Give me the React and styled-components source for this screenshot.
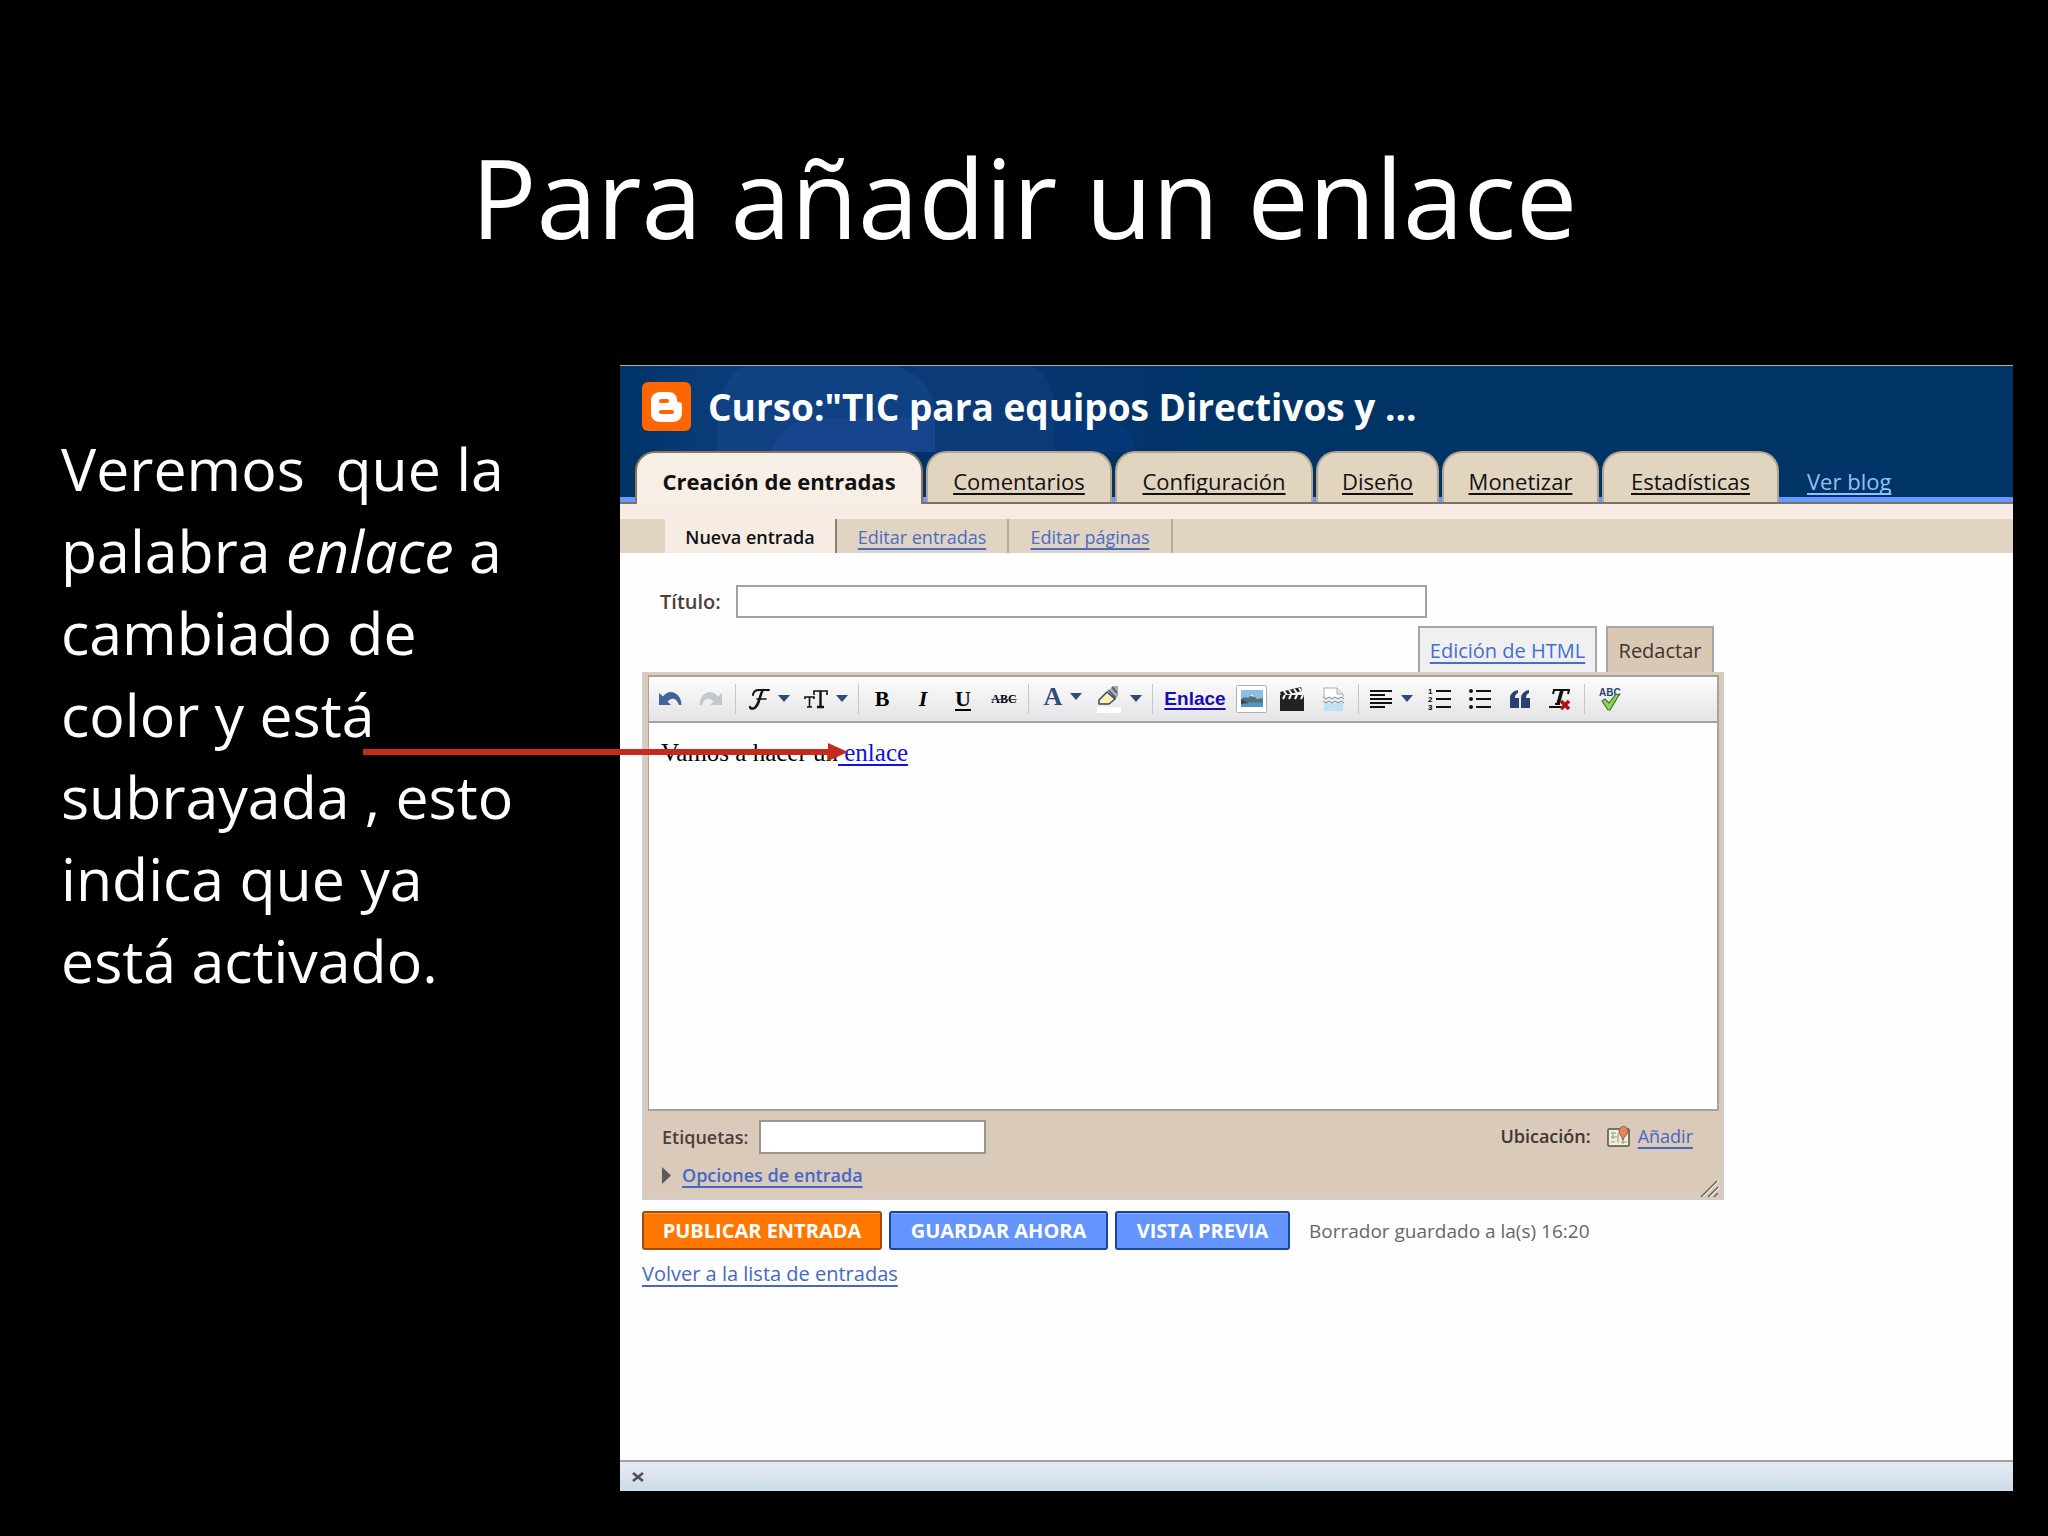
import React, { useState } from 'react'
import styled, { createGlobalStyle } from 'styled-components'

const uiFont = '"Open Sans", "Noto Sans", sans-serif'

const navTabs = [
  { label: 'Creación de entradas', width: 288 },
  { label: 'Comentarios', width: 186 },
  { label: 'Configuración', width: 198 },
  { label: 'Diseño', width: 123 },
  { label: 'Monetizar', width: 157 },
  { label: 'Estadísticas', width: 177 },
]

const Caret = () => (
  <svg width="12" height="8" viewBox="0 0 12 8">
    <path d="M0 0h12L6 7z" fill="#2f4a7c" />
  </svg>
)

const BloggerLogo = () => (
  <svg width="49" height="49" viewBox="0 0 49 49">
    <rect width="49" height="49" rx="6" fill="#ff6600" />
    <path
      d="M18 10h8.500c5 0 8.500 3.500 8.500 8v.5c0 1.200.8 1.800 2 1.800h.6c1.400 0 2.400.9 2.400 2.400V31c0 5.500-4 9-9 9H18c-5.500 0-9-3.500-9-9V19c0-5.500 4-9 9-9z"
      fill="#fff"
    />
    <rect x="17" y="17" width="10" height="4" rx="2" fill="#ff6600" />
    <rect x="17" y="28" width="15" height="4" rx="2" fill="#ff6600" />
  </svg>
)

const Undo = ({ color, flip }) => (
  <svg width="23" height="16" viewBox="0 0 23 16">
    <g transform={flip ? 'translate(23 0) scale(-1 1)' : undefined}>
      <path d="M0 2v12h12L8.500 10.500C12 6.500 17 6 20 14h2.500C22.500 6 17 1 12 1 9 1 6 2.500 4 5.500z" fill={color} />
    </g>
  </svg>
)

const FontFace = () => (
  <svg width="21" height="22" viewBox="0 0 21 22" fill="none" stroke="#111" strokeLinecap="round">
    <path d="M4 7C4.500 3 7 2 10 2h10" strokeWidth="2" />
    <path d="M14 2C10.500 6 10.500 19 4.500 20.500c-2 .4-3.500-.5-3.500-1.500" strokeWidth="2.500" />
    <path d="M8 11h9" strokeWidth="1.600" />
  </svg>
)

const FontSize = () => (
  <svg width="24" height="20" viewBox="0 0 24 20" fill="none" stroke="#111">
    <path d="M10 6V2h13v4" strokeWidth="1.600" />
    <path d="M16.500 2v16M13 18h7" strokeWidth="2.400" />
    <path d="M1 10V8h9v2M5.500 8v10M3 18h5" strokeWidth="1.600" />
  </svg>
)

const Marker = () => (
  <svg width="26" height="28" viewBox="0 0 26 28">
    <rect x="1" y="22" width="24" height="6" fill="#fff" />
    <path d="M13 5l4-4h5v10l-4 3z" fill="#a9a9ad" />
    <path d="M12 5l8 8M16 2l5 6" stroke="#4c5468" strokeWidth="1.500" />
    <path d="M11 7l8 7-6 5H3v-4z" fill="#fbf4b0" stroke="#34436b" strokeWidth="1.500" strokeLinejoin="round" />
  </svg>
)

const Picture = () => (
  <svg width="31" height="28" viewBox="0 0 31 28">
    <rect x=".5" y=".5" width="30" height="27" rx="1" fill="#fff" stroke="#b0b0b4" />
    <rect x="5" y="5" width="22" height="17" fill="#86bfe8" />
    <path d="M5 14l4-2 3 1 4-4 5 5 6-1v5H5z" fill="#5a7078" />
    <path d="M14 11l2-2 3 3z" fill="#e3edf2" />
    <path d="M5 18l8-1 14 1v4H5z" fill="#4e95c5" />
    <path d="M5 14l5 3 3 1-8 1z" fill="#34464a" />
  </svg>
)

const Clapper = () => (
  <svg width="24" height="24" viewBox="0 0 24 24">
    <rect x="0" y="11" width="24" height="13" fill="#222" />
    <path d="M0 5l21-5 1 4L1 9z" fill="#222" />
    <path d="M4 4l3 4M9 3l3 4M14 2l3 4M19 1l2 3" stroke="#fff" strokeWidth="2" />
    <rect x="0" y="8" width="24" height="4" fill="#222" />
    <path d="M5 8l-2 4M11 8l-2 4M17 8l-2 4M23 8l-2 4" stroke="#fff" strokeWidth="2" />
  </svg>
)

const PageBreak = () => (
  <svg width="23" height="24" viewBox="0 0 23 24">
    <path d="M2 10V1h13l6 6v3z" fill="#fff" />
    <path d="M2 10V1h13l6 6v3" fill="none" stroke="#a5adb8" />
    <path d="M15 1v6h6" fill="#dfe8f0" stroke="#a5adb8" />
    <path d="M2 16l3-1 3 2 3-2 3 2 3-2 4 1v8H2z" fill="#bfe0f5" />
    <path d="M1 10l3 2 3-2 3 2 3-2 3 2 3-2 3 2M1 14l3 2 3-2 3 2 3-2 3 2 3-2 3 2" fill="none" stroke="#76828f" />
  </svg>
)

const AlignLeft = () => (
  <svg width="23" height="20" viewBox="0 0 23 20" stroke="#111" strokeWidth="2">
    <path d="M0 2h22M0 6h15M0 10h22M0 14h22M0 18h15" />
  </svg>
)

const ListLines = ({ numbered }) => (
  <svg width="24" height="24" viewBox="0 0 24 24">
    <path d="M8 4h15M8 12h15M8 20h15" stroke="#111" strokeWidth="2" />
    {[4, 12, 20].map((y, i) =>
      numbered ? (
        <text key={y} x="0" y={y + 3} fontSize="8" fontWeight="700" fontFamily="Liberation Sans, sans-serif">
          {i + 1}
        </text>
      ) : (
        <circle key={y} cx="3" cy={y} r="2" fill="#111" />
      )
    )}
  </svg>
)

const Quotes = () => (
  <svg width="21" height="18" viewBox="0 0 21 18" fill="#2c3f70">
    <path d="M0 18V8C0 4 3 1 8 0v3C6 4 5 5 5 8h4v10z" />
    <path d="M11 18V8c0-4 3-7 8-8v3c-2 1-3 2-3 5h4v10z" />
  </svg>
)

const ClearFormat = () => (
  <svg width="24" height="23" viewBox="0 0 24 23" fill="none">
    <path d="M5 6l1-4h15l-1 4" stroke="#111" strokeWidth="2" />
    <path d="M14 2l-4 14" stroke="#111" strokeWidth="3.500" />
    <path d="M1 19h12M7 16h5" stroke="#111" strokeWidth="2" />
    <path d="M13 13l8 8M21 13l-8 8" stroke="#b01010" strokeWidth="3.500" />
  </svg>
)

const SpellCheck = () => (
  <svg width="23" height="24" viewBox="0 0 23 24">
    <text x="0" y="9" fontSize="10" fontWeight="700" fill="#2b4272" fontFamily="Liberation Sans, sans-serif">
      ABC
    </text>
    <path d="M3 14l3-2 4 4 7-9 3 1-9 15H9z" fill="#86dd4c" stroke="#4b6b48" strokeWidth="1.200" />
  </svg>
)

const MapPin = () => (
  <svg width="24" height="22" viewBox="0 0 24 22">
    <rect x="1" y="4" width="21" height="17" rx="1" fill="#f1efd9" stroke="#55514a" strokeWidth="1.500" />
    <path d="M4 8h5M4 12h6M4 17h4M11 8v10M14 17h6M6 8v6M16 14v5" stroke="#8f9b7d" />
    <path d="M16 15c-1-4-4-5-4-9a4.500 4.500 0 019 0c0 4-4 5-5 9z" fill="#e08a5c" stroke="#8a5a42" />
  </svg>
)

// soft bubbles behind the blog name
const Bubbles = () => (
  <svg width="600" height="86" viewBox="0 0 600 86">
    <rect width="600" height="86" fill="url(#fade)" />
    <path d="M290 0h120c18 6 24 22 24 44v42H300z" fill="#0a3a78" />
    <path d="M97 86V55C97 25 110 5 125 0h150c28 8 40 25 40 50v36z" fill="#104183" />
    <path d="M150 86c8-20 25-34 50-34h115v34z" fill="#16458d" />
    <path d="M434 52h48c22 4 32 16 34 34h-82z" fill="#07387a" opacity=".8" />
    <defs>
      <linearGradient id="fade">
        <stop offset="0" stopColor="#003366" />
        <stop offset=".15" stopColor="#0a3c79" />
        <stop offset=".65" stopColor="#063670" />
        <stop offset="1" stopColor="#003366" />
      </linearGradient>
    </defs>
  </svg>
)

function App() {
  const [title, setTitle] = useState('')
  const [labels, setLabels] = useState('')

  return (
    <Slide>
      <GlobalStyle />
      <Headline>Para añadir un enlace</Headline>
      <Content>
        <Explain>
          Veremos{'  '}que la palabra <em>enlace</em> a cambiado de color y está subrayada , esto indica que ya está
          activado.
        </Explain>
        <Browser>
          <BlogHeader>
            <Backdrop>
              <Bubbles />
            </Backdrop>
            <Brand>
              <BloggerLogo />
              <BlogName>Curso:"TIC para equipos Directivos y ...</BlogName>
            </Brand>
            <Nav>
              {navTabs.map((tab, i) => (
                <NavTab key={tab.label} href="#" $width={tab.width} $active={i === 0}>
                  {tab.label}
                </NavTab>
              ))}
              <ViewBlog href="#">Ver blog</ViewBlog>
            </Nav>
          </BlogHeader>
          <SubNav>
            <SubTab href="#" $width={172} $active>
              Nueva entrada
            </SubTab>
            <SubTab href="#" $width={172}>
              Editar entradas
            </SubTab>
            <SubTab href="#" $width={164}>
              Editar páginas
            </SubTab>
          </SubNav>
          <Main>
            <TitleRow>
              <TitleLabel htmlFor="titulo">Título:</TitleLabel>
              <TitleInput id="titulo" value={title} onChange={(e) => setTitle(e.target.value)} />
            </TitleRow>
            <Modes>
              <ModeTab $width={179}>Edición de HTML</ModeTab>
              <ModeTab $width={108} $active>Redactar</ModeTab>
            </Modes>
            <Editor>
              <Paper>
                <Toolbar>
                  <Tool $width={42} aria-label="Deshacer"><Undo color="#42639c" /></Tool>
                  <Tool $width={38} aria-label="Rehacer"><Undo color="#c3c7d0" flip /></Tool>
                  <Divider $width={12} />
                  <Tool $width={56} aria-label="Fuente"><FontFace /><Caret /></Tool>
                  <Tool $width={58} aria-label="Tamaño"><FontSize /><Caret /></Tool>
                  <Divider $width={6} />
                  <Letter $width={42}>B</Letter>
                  <Letter $width={40} $italic>I</Letter>
                  <Letter $width={40} $under>U</Letter>
                  <Strike $width={42}>ABC</Strike>
                  <Divider $width={6} />
                  <ColorTool $width={64}>A<Caret /></ColorTool>
                  <Tool $width={48} aria-label="Resaltar"><Marker /><Caret /></Tool>
                  <Divider $width={18} />
                  <LinkTool $width={68}>Enlace</LinkTool>
                  <Tool $width={44} aria-label="Imagen"><Picture /></Tool>
                  <Tool $width={38} aria-label="Vídeo"><Clapper /></Tool>
                  <Tool $width={44} aria-label="Salto"><PageBreak /></Tool>
                  <Divider $width={6} />
                  <Tool $width={60} aria-label="Alinear"><AlignLeft /><Caret /></Tool>
                  <Tool $width={38} aria-label="Lista numerada"><ListLines numbered /></Tool>
                  <Tool $width={42} aria-label="Lista"><ListLines /></Tool>
                  <Tool $width={38} aria-label="Cita"><Quotes /></Tool>
                  <Tool $width={42} aria-label="Quitar formato"><ClearFormat /></Tool>
                  <Divider $width={6} />
                  <Tool $width={46} aria-label="Ortografía"><SpellCheck /></Tool>
                </Toolbar>
                <Writing contentEditable suppressContentEditableWarning role="textbox" aria-label="Entrada">
                  Vamos a hacer un<a href="#"> enlace</a>
                </Writing>
              </Paper>
              <EditorFoot>
                <div>
                  <LabelRow>
                    <FieldLabel htmlFor="etiquetas">Etiquetas:</FieldLabel>
                    <LabelInput id="etiquetas" value={labels} onChange={(e) => setLabels(e.target.value)} />
                  </LabelRow>
                  <Options>
                    <svg width="9" height="17" viewBox="0 0 9 17">
                      <path d="M0 0l9 8.500L0 17z" fill="#5f5a58" />
                    </svg>
                    <BlueLink href="#" $bold>Opciones de entrada</BlueLink>
                  </Options>
                </div>
                <Place>
                  <PlaceName>Ubicación:</PlaceName>
                  <MapPin />
                  <BlueLink href="#">Añadir</BlueLink>
                </Place>
              </EditorFoot>
              <Grip>
                <svg width="20" height="18" viewBox="0 0 20 18">
                  <path d="M1 17L17 1M8 17l10-10M14 17l4-4" stroke="#6d6862" strokeWidth="1.500" />
                  <path d="M3 17L19 1M10 17l9-9" stroke="#fff" />
                </svg>
              </Grip>
            </Editor>
            <Actions>
              <ActionButton $width={240} $orange>PUBLICAR ENTRADA</ActionButton>
              <ActionButton $width={219}>GUARDAR AHORA</ActionButton>
              <ActionButton $width={175}>VISTA PREVIA</ActionButton>
              <Saved>Borrador guardado a la(s) 16:20</Saved>
            </Actions>
            <BackLink href="#">Volver a la lista de entradas</BackLink>
          </Main>
          <StatusBar>
            <CloseButton aria-label="Cerrar">
              <svg width="12" height="10" viewBox="0 0 12 10">
                <path d="M1 1l10 8M11 1L1 9" stroke="#4a4f58" strokeWidth="2.500" />
              </svg>
            </CloseButton>
          </StatusBar>
        </Browser>
        <Arrow>
          <svg width="486" height="20" viewBox="0 0 486 20" fill="#c42b1c">
            <path d="M0 7h465V1l20 9-20 9v-6H0z" />
          </svg>
        </Arrow>
      </Content>
    </Slide>
  )
}

const GlobalStyle = createGlobalStyle`
  * { box-sizing: border-box; }
  body { margin: 0; background: #000; }
  svg { display: block; flex: none; }
  button { font: inherit; border: 0; padding: 0; background: none; cursor: pointer; }
`

const Slide = styled.div`
  min-height: 100vh;
  display: flex;
  flex-direction: column;
  padding: 130px 35px 45px 61px;
  background: #000;
  color: #fff;
  font-family: ${uiFont};
`

const Headline = styled.h1`
  margin: 0 0 101px;
  padding-right: 26px;
  text-align: center;
  font-size: 109px;
  line-height: 134px;
  font-weight: 400;
`

const Content = styled.div`
  position: relative;
  flex: 1;
  display: flex;
  gap: 79px;
`

const Explain = styled.p`
  flex: 0 0 480px;
  margin: 62px 0 0;
  font-size: 59px;
  line-height: 82px;
  white-space: pre-wrap;
`

const Browser = styled.section`
  flex: 1;
  min-width: 0;
  display: flex;
  flex-direction: column;
  border-top: 1px solid #a9b0ae;
  background: #fefefe;
  color: #333;
`

const BlogHeader = styled.header`
  position: relative;
  background: #003366;
  border-bottom: 2px solid #7d7068;
`

const Backdrop = styled.div`
  position: absolute;
  top: 0;
  left: 0;
`

const Brand = styled.div`
  position: relative;
  display: flex;
  align-items: center;
  gap: 17px;
  padding: 16px 22px 20px;
`

const BlogName = styled.h2`
  margin: 0;
  color: #fff;
  font-size: 37px;
  line-height: 49px;
  font-weight: 700;
`

const Nav = styled.nav`
  position: relative;
  display: flex;
  align-items: flex-start;
  gap: 3px;
  padding-left: 15px;
  background: linear-gradient(#6699ff, #6699ff) bottom / 100% 5px no-repeat;
`

const NavTab = styled.a`
  width: ${(p) => p.$width}px;
  height: ${(p) => (p.$active ? 53 : 51)}px;
  margin-bottom: ${(p) => (p.$active ? -2 : 0)}px;
  padding-top: 13px;
  border: 2px solid ${(p) => (p.$active ? '#8a7561' : '#b5a48f')};
  border-bottom: 0;
  border-radius: 20px 20px 0 0;
  background: ${(p) => (p.$active ? '#f7eee6' : '#e2d5c0')};
  color: #111;
  text-align: center;
  font-size: 22px;
  line-height: 30px;
  font-weight: ${(p) => (p.$active ? 700 : 400)};
  text-decoration: ${(p) => (p.$active ? 'none' : 'underline')};
  text-underline-offset: 3px;
  text-decoration-thickness: 2px;
  text-decoration-skip-ink: none;
`

const ViewBlog = styled.a`
  padding: 15px 0 0 25px;
  color: #8fc2f5;
  font-size: 22px;
  line-height: 30px;
  text-underline-offset: 3px;
  text-decoration-thickness: 2px;
  text-decoration-skip-ink: none;
`

const SubNav = styled.nav`
  display: flex;
  padding-left: 45px;
  border-top: 15px solid #f7ece3;
  background: #e2d4c2;
`

const SubTab = styled.a`
  width: ${(p) => p.$width}px;
  padding: 5px 0 3px;
  border-right: 2px solid ${(p) => (p.$active ? '#8b8078' : '#b9ab9c')};
  background: ${(p) => (p.$active ? '#f7ece3' : 'transparent')};
  color: ${(p) => (p.$active ? '#111' : '#4a6cc4')};
  text-align: center;
  font-size: 18px;
  line-height: 26px;
  font-weight: ${(p) => (p.$active ? 600 : 400)};
  text-decoration: ${(p) => (p.$active ? 'none' : 'underline')};
  text-underline-offset: 4px;
  text-decoration-thickness: 2px;
  text-decoration-skip-ink: none;
`

const Main = styled.main`
  flex: 1;
  padding: 32px 22px 0;
`

const TitleRow = styled.div`
  display: flex;
  align-items: center;
  gap: 15px;
  padding-left: 18px;
`

const FieldLabel = styled.label`
  color: #4a3f3a;
  font-size: 18px;
  line-height: 24px;
  font-weight: 600;
`

const TitleLabel = styled(FieldLabel)`
  font-size: 20px;
  line-height: 28px;
`

const TitleInput = styled.input`
  flex: 0 1 691px;
  min-width: 0;
  height: 33px;
  padding: 0 8px;
  border: 2px solid #a3a3a3;
  background: #fff;
  font: 20px ${uiFont};
`

const Modes = styled.div`
  display: flex;
  justify-content: flex-end;
  gap: 9px;
  max-width: 1082px;
  margin-top: 8px;
  padding-right: 10px;
`

const ModeTab = styled.button`
  width: ${(p) => p.$width}px;
  height: 46px;
  padding-top: 2px;
  border: 2px solid #a6a6aa;
  border-bottom: 0;
  background: ${(p) => (p.$active ? '#d9c9b4' : '#f0eff1')};
  color: ${(p) => (p.$active ? '#40342e' : '#4470cc')};
  font-size: 20px;
  line-height: 28px;
  text-decoration: ${(p) => (p.$active ? 'none' : 'underline')};
  text-underline-offset: 4px;
  text-decoration-thickness: 2px;
`

const Editor = styled.div`
  position: relative;
  max-width: 1082px;
  padding: 3px 3px 0 4px;
  border: 1px solid #cfcfcf;
  border-width: 0 2px 2px;
  background: #d9cab9;
`

const Paper = styled.div`
  border: 1px solid #aaa29a;
  border-width: 2px 2px 2px 1px;
  background: #fefefe;
`

const Toolbar = styled.div`
  display: flex;
  align-items: center;
  height: 46px;
  border-bottom: 2px solid #a2a2a6;
  background: linear-gradient(#fdfdfd, #e4e3e5);
`

const Tool = styled.button`
  flex: none;
  display: flex;
  align-items: center;
  justify-content: center;
  gap: 8px;
  width: ${(p) => p.$width}px;
  height: 40px;
`

const Divider = styled.span`
  flex: none;
  width: ${(p) => p.$width}px;
  height: 30px;
  background: linear-gradient(#c6c6ca, #c6c6ca) center / 1px 100% no-repeat;
`

const Letter = styled(Tool)`
  color: #000;
  font: ${(p) => (p.$italic ? 'italic' : 'normal')} 700 22px 'Liberation Serif', serif;
  text-decoration: ${(p) => (p.$under ? 'underline' : 'none')};
  text-underline-offset: 3px;
  text-decoration-thickness: 2px;
`

const ColorTool = styled(Tool)`
  padding-bottom: 4px;
  color: #2f4a7c;
  font: 700 26px 'Liberation Serif', serif;
`

const Strike = styled(Tool)`
  color: #000;
  font: 700 12px 'Liberation Serif', serif;
  text-decoration: line-through #2f4a7c;
`

const LinkTool = styled(Tool)`
  color: #1a0dab;
  font: 700 19px 'Liberation Sans', sans-serif;
  text-decoration: underline;
  text-underline-offset: 3px;
  text-decoration-thickness: 2px;
`

const Writing = styled.div`
  min-height: 386px;
  padding: 16px 12px;
  color: #000;
  font: 25px/28px 'Liberation Serif', serif;
  white-space: pre-wrap;
  a {
    color: #1010e0;
    text-underline-offset: 3px;
    text-decoration-thickness: 2px;
  }
`

const EditorFoot = styled.div`
  display: flex;
  justify-content: space-between;
  padding: 9px 26px 11px 14px;
`

const LabelRow = styled.div`
  display: flex;
  align-items: center;
  gap: 11px;
`

const LabelInput = styled.input`
  width: 227px;
  height: 34px;
  padding: 0 8px;
  border: 2px solid #9c958e;
  background: #fff;
  font: 18px ${uiFont};
`

const Options = styled.div`
  display: flex;
  align-items: center;
  gap: 11px;
  margin-top: 9px;
`

const BlueLink = styled.a`
  color: #4468c8;
  font-size: 18px;
  line-height: 24px;
  font-weight: ${(p) => (p.$bold ? 600 : 400)};
  text-underline-offset: 4px;
  text-decoration-thickness: 2px;
  text-decoration-skip-ink: none;
`

const Place = styled.div`
  display: flex;
  align-items: center;
  align-self: flex-start;
  gap: 7px;
  margin-top: 4px;
`

const PlaceName = styled.span`
  margin-right: 9px;
  color: #3d3733;
  font-size: 18px;
  line-height: 24px;
  font-weight: 600;
`

const Grip = styled.div`
  position: absolute;
  right: 2px;
  bottom: 0;
`

const Actions = styled.div`
  display: flex;
  align-items: center;
  gap: 7px;
  margin-top: 11px;
`

const ActionButton = styled.button`
  width: ${(p) => p.$width}px;
  height: 39px;
  border: 2px solid ${(p) => (p.$orange ? '#a8480c' : '#1b459c')};
  border-radius: 3px;
  background: ${(p) => (p.$orange ? '#ff7700' : '#6495ff')};
  box-shadow: inset 0 1px ${(p) => (p.$orange ? '#ff9c42' : '#8fb4ff')};
  color: #fff;
  font-size: 20px;
  line-height: 26px;
  font-weight: 700;
`

const Saved = styled.span`
  margin-left: 12px;
  color: #666;
  font-size: 19px;
  line-height: 26px;
`

const BackLink = styled(BlueLink)`
  display: inline-block;
  margin-top: 10px;
  font-size: 20px;
  line-height: 28px;
`

const StatusBar = styled.footer`
  display: flex;
  align-items: center;
  height: 31px;
  padding-left: 12px;
  border-top: 2px solid #a0a0a4;
  background: linear-gradient(#e9ebf3, #cddbea);
`

const CloseButton = styled.button`
  line-height: 0;
`

const Arrow = styled.div`
  position: absolute;
  left: 302px;
  top: 377px;
`

export default App
